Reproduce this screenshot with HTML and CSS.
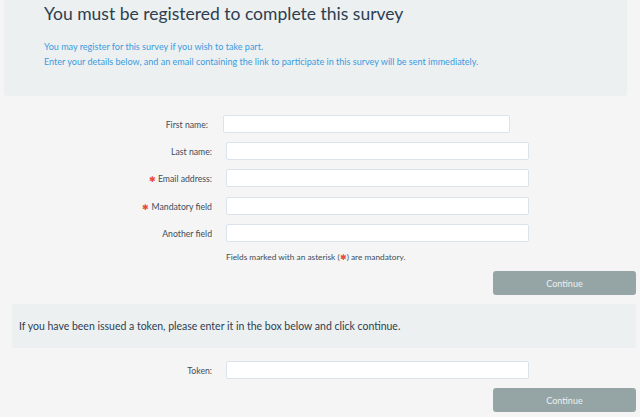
FILE: index.html
```html
<!DOCTYPE html>
<html>
    <head>
        <title>Survey registration</title>
        <link rel="stylesheet" href="styles.css">
    </head>
    <body>
        <div class="intro">
            <h1>You must be registered to complete this survey</h1>
            <p class="lead">You may register for this survey if you wish to take part.<br>
            Enter your details below, and an email containing the link to participate in this survey will be sent immediately.</p>
        </div>

        <form class="register">
            <div class="row row-first">
                <label for="fname">First name:</label>
                <input type="text" id="fname" />
            </div>
            <div class="row">
                <label for="lname">Last name:</label>
                <input type="text" id="lname" />
            </div>
            <div class="row">
                <label for="email"><span class="req">&#10033;</span> Email address:</label>
                <input type="text" id="email" />
            </div>
            <div class="row">
                <label for="mand"><span class="req">&#10033;</span> Mandatory field</label>
                <input type="text" id="mand" />
            </div>
            <div class="row">
                <label for="other">Another field</label>
                <input type="text" id="other" />
            </div>
            <p class="note">Fields marked with an asterisk (<span class="req">&#10033;</span>) are mandatory.</p>
            <div class="actions"><button type="button">Continue</button></div>
        </form>

        <div class="token-box">
            <p>If you have been issued a token, please enter it in the box below and click continue.</p>
        </div>

        <form class="register token">
            <div class="row">
                <label for="tok">Token:</label>
                <input type="text" id="tok" />
            </div>
            <div class="actions"><button type="button">Continue</button></div>
        </form>
    </body>
</html>
```

FILE: styles.css
```css
/* flat grey theme */
body {
    margin: 0;
    background: #f5f5f5;
    font-family: Lato, "Open Sans", sans-serif;
    color: #2c3e50;
}

.intro {
    margin: 0 13px 0 4px;
    padding: 3px 40px 0;
    height: 93px;
    background: #ecf0f1;
    border-radius: 0 0 4px 4px;
}

.intro h1 {
    margin: 0;
    font-size: 17.5px;
    font-weight: 400;
    line-height: 22px;
}

.lead {
    margin: 14px 0 0;
    font-size: 9.05px;
    line-height: 15px;
    color: #3a9be0;
}

.register {
    display: flex;
    flex-direction: column;
    padding-top: 19px;
}

.row {
    display: grid;
    grid-template-columns: 212px 303px;
    column-gap: 14px;
    align-items: center;
    margin-bottom: 9px;
}

/* the mandatory row sits one pixel lower */
.row:nth-child(4) {
    margin-top: 1px;
}

.row-first {
    grid-template-columns: 208px 287px;
    column-gap: 15px;
}

label {
    text-align: right;
    font-size: 8.7px;
    color: #3d4d5c;
}

input {
    box-sizing: border-box;
    height: 18px;
    margin: 0;
    border: 1px solid #dbe3ec;
    border-radius: 2px;
    background: #fff;
}

.req {
    color: #e74c3c;
    font-size: 8px;
}

.note {
    margin: 0 0 8px 226px;
    font-size: 8.3px;
    line-height: 12px;
    color: #3d4d5c;
}

.actions {
    display: flex;
    justify-content: flex-end;
    padding-right: 4px;
}

button {
    width: 143px;
    height: 24px;
    border: 0;
    border-radius: 3px;
    background: #95a5a6;
    color: #ecf0f1;
    font-family: inherit;
    font-size: 9px;
}

.token-box {
    margin: 9px 4px 0 12px;
    padding: 0 7px;
    height: 44px;
    display: flex;
    align-items: center;
    background: #ecf0f1;
    border-radius: 3px;
}

.token-box p {
    margin: 0;
    font-size: 10.5px;
}

.register.token {
    padding-top: 13px;
}
```
